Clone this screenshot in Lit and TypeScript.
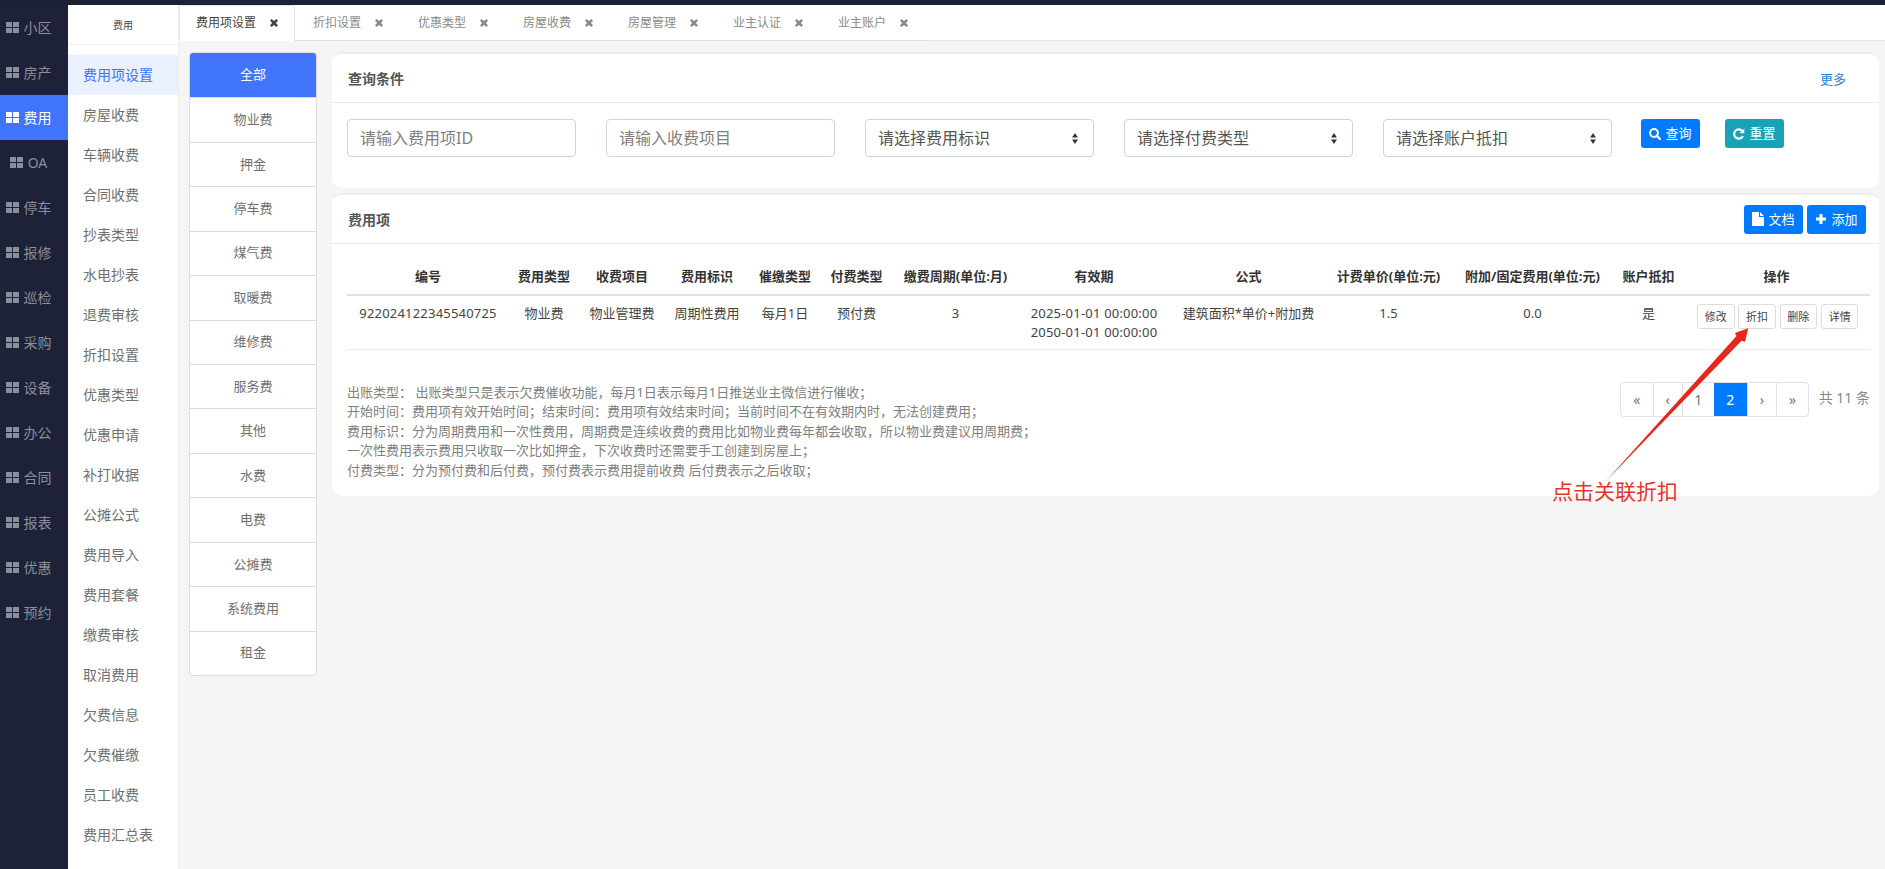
import { LitElement, html, css, svg } from "lit";
import { customElement } from "lit/decorators.js";

const MAIN = ["小区", "房产", "费用", "OA", "停车", "报修", "巡检", "采购", "设备", "办公", "合同", "报表", "优惠", "预约"];
const SUB = ["费用项设置", "房屋收费", "车辆收费", "合同收费", "抄表类型", "水电抄表", "退费审核", "折扣设置", "优惠类型", "优惠申请", "补打收据", "公摊公式", "费用导入", "费用套餐", "缴费审核", "取消费用", "欠费信息", "欠费催缴", "员工收费", "费用汇总表"];
const TABS = ["费用项设置", "折扣设置", "优惠类型", "房屋收费", "房屋管理", "业主认证", "业主账户"];
const CATS = ["全部", "物业费", "押金", "停车费", "煤气费", "取暖费", "维修费", "服务费", "其他", "水费", "电费", "公摊费", "系统费用", "租金"];
const COLS: [string, number][] = [["编号", 162], ["费用类型", 70], ["收费项目", 86], ["费用标识", 84], ["催缴类型", 72], ["付费类型", 71], ["缴费周期(单位:月)", 127], ["有效期", 150], ["公式", 159], ["计费单价(单位:元)", 121], ["附加/固定费用(单位:元)", 167], ["账户抵扣", 65], ["操作", 189]];
const HINTS = [
  "出账类型： 出账类型只是表示欠费催收功能，每月1日表示每月1日推送业主微信进行催收；",
  "开始时间：费用项有效开始时间；结束时间：费用项有效结束时间；当前时间不在有效期内时，无法创建费用；",
  "费用标识：分为周期费用和一次性费用，周期费是连续收费的费用比如物业费每年都会收取，所以物业费建议用周期费；",
  "一次性费用表示费用只收取一次比如押金，下次收费时还需要手工创建到房屋上；",
  "付费类型：分为预付费和后付费，预付费表示费用提前收费 后付费表示之后收取；",
];

const grid = html`<svg class="grid" viewBox="0 0 13 11"><rect x="0" y="0" width="6" height="5"/><rect x="7" y="0" width="6" height="5"/><rect x="0" y="6" width="6" height="5"/><rect x="7" y="6" width="6" height="5"/></svg>`;
const times = html`<svg class="times" viewBox="0 0 8 8"><path d="M1.6 0 4 2 6.4 0 8 1.7 5.9 4 8 6.3 6.4 8 4 6 1.6 8 0 6.3 2.1 4 0 1.7z"/></svg>`;
const arrows = html`<svg class="caret" viewBox="0 0 8 15"><path d="M4 0 8 6H0zM0 9h8l-4 6z"/></svg>`;
const iconSearch = html`<svg class="ic" viewBox="0 0 12 12"><circle cx="5" cy="5" r="3.9" fill="none" stroke="currentColor" stroke-width="2"/><path d="M7.8 7.8 11 11" stroke="currentColor" stroke-width="2.4" stroke-linecap="round"/></svg>`;
const iconRefresh = html`<svg class="ic" viewBox="0 0 12 12"><path d="M9.9 8A4.6 4.6 0 1 1 9.3 3" fill="none" stroke="currentColor" stroke-width="2.2"/><path d="M11.3 .4v4.8H6.5z"/></svg>`;
const iconFile = html`<svg class="ic tall" viewBox="0 0 12 14"><path d="M0 0h7v5h5v9H0zM8 0l4 4H8z"/></svg>`;
const iconPlus = html`<svg class="ic" viewBox="0 0 12 12"><path d="M4.5 1h3v3.5H11v3H7.5V11h-3V7.5H1v-3h3.5z"/></svg>`;

@customElement("app-root")
export class AppRoot extends LitElement {
  static styles = css`
    :host {
      display: block;
      width: 1885px;
      height: 869px;
      overflow: hidden;
      position: relative;
      font-family: "Noto Sans", "Noto Sans CJK SC", sans-serif;
      font-size: 13px;
      color: #444;
      background: #f5f5f5;
    }
    * { box-sizing: border-box; }
    .top { height: 5px; background: #1c2136; }
    .body { display: flex; height: 864px; }

    .main { width: 68px; flex: none; background: #1e2238; }
    .main div { height: 45px; display: flex; align-items: center; justify-content: center; gap: 5px; color: #8b8e9b; font-size: 14px; padding-right: 11px; }
    .main span { line-height: 14px; }
    .main div.on { background: #3f74fb; color: #fff; }
    .grid { width: 13px; height: 11px; fill: currentColor; flex: none; }

    .sub { width: 111px; flex: none; background: #fff; border-right: 1px solid #eee; }
    .sub-h { height: 40px; border-bottom: 1px solid #f0f0f0; display: flex; align-items: center; justify-content: center; font-size: 10px; color: #444; margin-bottom: 10px; }
    .sub-i { height: 40px; padding: 0 0 1px 15px; display: flex; align-items: center; font-size: 14px; line-height: 14px; color: #707070; }
    .sub-i.on { background: #eaf0fd; color: #3f74fb; }

    .content { flex: 1; min-width: 0; display: flex; flex-direction: column; }
    .tabs { height: 36px; display: flex; flex: none; background: #fff; border-bottom: 1px solid #e5e5e5; }
    .tab { height: 36px; padding: 0 18px 0 17px; display: flex; align-items: center; gap: 14px; font-size: 12px; line-height: 12px; color: #8a8a8a; border-bottom: 1px solid #e0e0e0; }
    .tab.on { color: #444; border: 1px solid #e5e5e5; border-bottom-color: #fff; border-radius: 3px 3px 0 0; padding: 0 16px; margin-right: 1px; }
    .times { width: 8px; height: 8px; fill: #8a8a8a; flex: none; }
    .tab.on .times { fill: #444; }

    .work { flex: 1; display: flex; padding: 11px 6px 0 10px; gap: 15px; align-items: flex-start; }
    .cats { width: 128px; flex: none; background: #fff; border: 1px solid #ddd; border-radius: 4px; overflow: hidden; }
    .cat { height: 44.5px; padding-bottom: 1px; display: flex; align-items: center; justify-content: center; font-size: 13px; line-height: 13px; color: #707070; border-top: 1px solid #ddd; margin-top: -0.07px; }
    .cat:first-child { border-top: 0; }
    .cat.on { background: #3f74fb; color: #fff; }

    .cols { flex: 1; min-width: 0; display: flex; flex-direction: column; gap: 5px; }
    .card { background: #fff; border-radius: 10px; border-top: 2px solid #ebedef; }
    .c-head { height: 49px; padding: 0 16px; display: flex; align-items: center; justify-content: space-between; border-bottom: 1px solid #eaeaea; }
    .c-title { font-size: 14px; line-height: 14px; font-weight: bold; color: #555; padding-top: 2px; }
    .more { color: #2f7fd6; font-size: 13px; line-height: 13px; margin-right: 17px; padding-top: 2px; }
    .filters { padding: 16px 15px 0; height: 85px; display: flex; align-items: flex-start; }
    .field { width: 229px; height: 38px; margin-right: 30px; border: 1px solid #ced4da; border-radius: 4px; padding: 0 12px; display: flex; align-items: center; justify-content: space-between; font-size: 16px; line-height: 16px; color: #808080; flex: none; }
    .field.sel { color: #555; }
    .caret { width: 8px; height: 11px; fill: #333; margin-right: 2px; }
    .btn { height: 29px; width: 59px; border-radius: 3px; color: #fff; background: #007bff; display: flex; align-items: center; justify-content: center; gap: 4px; font-size: 13px; line-height: 13px; flex: none; }
    .filters .btn:not(.info) { margin-left: -1px; }
    .btn.info { background: #17a2b8; margin-left: 25px; }
    .ic { width: 12px; height: 12px; fill: currentColor; flex: none; }
    .ic.tall { height: 14px; }
    .head-btns { display: flex; gap: 4px; margin-right: -3px; }

    .tbl-wrap { padding: 16px 15px 0 15px; }
    table { width: 1523px; table-layout: fixed; border-collapse: collapse; font-size: 13px; color: #444; }
    th { height: 35px; padding: 0 0 9px; font-weight: bold; text-align: center; vertical-align: bottom; border-bottom: 2px solid #dee2e6; color: #333; white-space: nowrap; }
    th:last-child { padding-left: 2px; }
    td { height: 54px; padding: 8px 0 0; line-height: 19px; text-align: center; vertical-align: top; border-bottom: 1px solid #e9ecef; white-space: nowrap; }
    .num { letter-spacing: 0.2px; }
    .ops { display: flex; gap: 3.8px; justify-content: flex-start; padding-left: 16px; }
    .op { width: 37.5px; height: 25px; border: 1px solid #ddd; border-radius: 3px; display: flex; align-items: center; justify-content: center; font-size: 11px; line-height: 11px; color: #444; background: #fff; }

    .foot { display: flex; justify-content: space-between; padding: 0 9px 0 15px; height: 146px; }
    .hints { margin-top: 33px; font-size: 13px; line-height: 19.5px; color: #808080; }
    .pager-wrap { display: flex; gap: 10px; margin-top: 32px; align-items: flex-start; }
    .pager { display: flex; height: 35px; border: 1px solid #dee2e6; border-radius: 4px; }
    .pg { display: flex; align-items: center; justify-content: center; border-left: 1px solid #dee2e6; color: #777; font-size: 14px; }
    .pg:first-child { border-left: 0; }
    .pg.on { background: #007bff; color: #fff; border-left: 0; }
    .total { font-size: 14px; color: #888; margin-top: 5px; }

    .overlay { position: absolute; left: 0; top: 0; width: 1885px; height: 869px; pointer-events: none; }
    .note { position: absolute; left: 1552px; top: 476px; font-size: 21px; line-height: 30px; color: #e8352b; white-space: nowrap; }
  `;

  render() {
    const pages: [string, number, boolean][] = [["«", 32, false], ["‹", 29, false], ["1", 32, false], ["2", 33, true], ["›", 29.5, false], ["»", 31.5, false]];
    return html`
      <div class="top"></div>
      <div class="body">
        <nav class="main">${MAIN.map((m) => html`<div class=${m === "费用" ? "on" : ""}>${grid}<span>${m}</span></div>`)}</nav>
        <nav class="sub">
          <div class="sub-h">费用</div>
          ${SUB.map((s, i) => html`<div class="sub-i ${i === 0 ? "on" : ""}">${s}</div>`)}
        </nav>
        <div class="content">
          <div class="tabs">
            ${TABS.map((t, i) => html`<div class="tab ${i === 0 ? "on" : ""}">${t}${times}</div>`)}
          </div>
          <div class="work">
            <div class="cats">${CATS.map((c, i) => html`<div class="cat ${i === 0 ? "on" : ""}">${c}</div>`)}</div>
            <div class="cols">
              <section class="card">
                <div class="c-head"><span class="c-title">查询条件</span><span class="more">更多</span></div>
                <div class="filters">
                  <div class="field">请输入费用项ID</div>
                  <div class="field">请输入收费项目</div>
                  <div class="field sel">请选择费用标识${arrows}</div>
                  <div class="field sel">请选择付费类型${arrows}</div>
                  <div class="field sel">请选择账户抵扣${arrows}</div>
                  <div class="btn">${iconSearch}查询</div>
                  <div class="btn info">${iconRefresh}重置</div>
                </div>
              </section>
              <section class="card">
                <div class="c-head"><span class="c-title">费用项</span>
                  <div class="head-btns"><div class="btn">${iconFile}文档</div><div class="btn">${iconPlus}添加</div></div>
                </div>
                <div class="tbl-wrap">
                  <table>
                    <colgroup>${COLS.map((c) => html`<col style="width:${c[1]}px" />`)}</colgroup>
                    <thead><tr>${COLS.map((c) => html`<th>${c[0]}</th>`)}</tr></thead>
                    <tbody><tr>
                      <td class="num">922024122345540725</td><td>物业费</td><td>物业管理费</td><td>周期性费用</td><td>每月1日</td><td>预付费</td><td>3</td>
                      <td class="num">2025-01-01 00:00:00<br />2050-01-01 00:00:00</td>
                      <td>建筑面积*单价+附加费</td><td>1.5</td><td>0.0</td><td>是</td>
                      <td><div class="ops">${["修改", "折扣", "删除", "详情"].map((o) => html`<div class="op">${o}</div>`)}</div></td>
                    </tr></tbody>
                  </table>
                </div>
                <div class="foot">
                  <div class="hints">${HINTS.map((h) => html`<div>${h}</div>`)}</div>
                  <div class="pager-wrap">
                    <div class="pager">${pages.map((p) => html`<div class="pg ${p[2] ? "on" : ""}" style="width:${p[1]}px">${p[0]}</div>`)}</div>
                    <div class="total">共 11 条</div>
                  </div>
                </div>
              </section>
            </div>
          </div>
        </div>
      </div>
      <svg class="overlay" viewBox="0 0 1885 869">
        ${svg`<path d="M1605 482 1736.5 336 1735 333 1748.3 328.3 1745 341.7 1741.5 340.8z" fill="#e8271c"/>`}
      </svg>
      <div class="note">点击关联折扣</div>
    `;
  }
}
